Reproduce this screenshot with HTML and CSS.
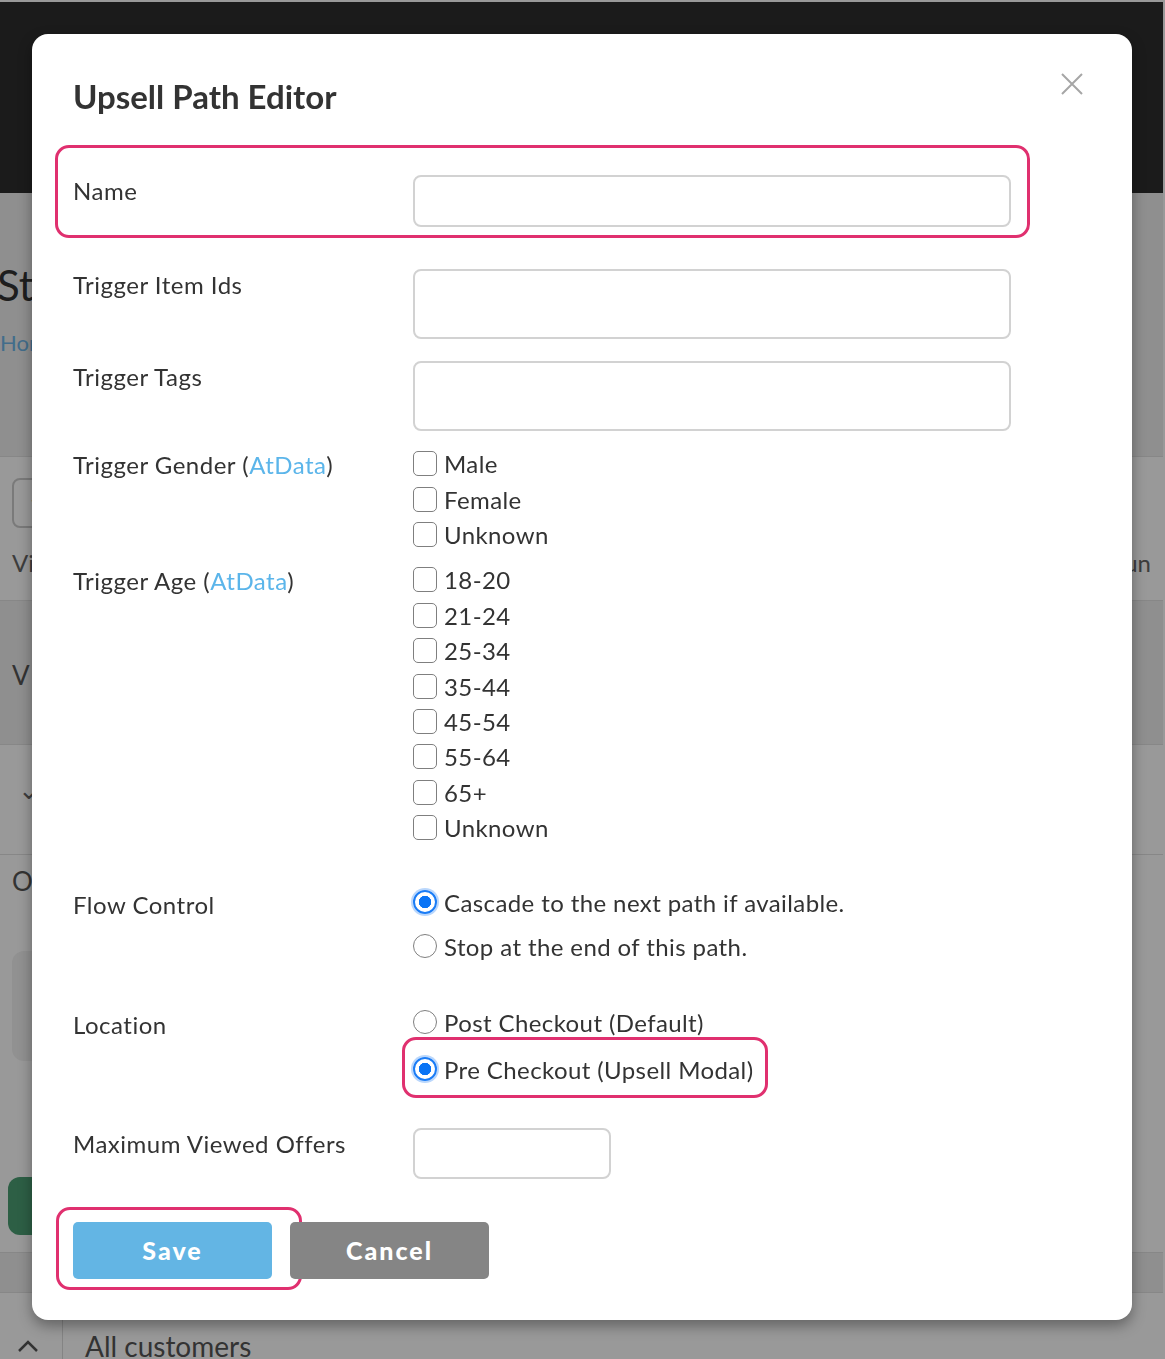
FILE: index.html
```html
<!DOCTYPE html>
<html lang="en">
<head>
    <meta charset="UTF-8">
    <meta name="viewport" content="width=device-width, initial-scale=1.0">
    <title>Upsell Path Editor</title>
    <link rel="stylesheet" href="styles.css">
</head>
<body>
    <div class="page">
        <header class="topbar"></header>
        <section class="band band-grey band-title">
            <h1 class="page-title">St</h1>
            <a class="crumb" href="#">Hor</a>
        </section>
        <section class="band band-white band-filter">
            <div class="filter-box">1</div>
            <div class="filter-row"><span>Vi</span><span>un</span></div>
        </section>
        <section class="band band-grey band-view">
            <span class="band-text">V</span>
        </section>
        <section class="band band-white band-toggle">
            <span class="chevron">&#8964;</span>
        </section>
        <section class="band band-white band-offers">
            <span class="band-text">O</span>
            <div class="offer-card"></div>
            <div class="green-btn"></div>
        </section>
        <section class="band band-grey band-strip"></section>
        <section class="band band-white band-footer">
            <span class="chevron-up">
                <svg width="22" height="14" viewBox="0 0 22 14"><path d="M2 12 L11 3 L20 12" stroke="#555" stroke-width="2.5" fill="none"/></svg>
            </span>
            <span class="footer-text">All customers</span>
        </section>
    </div>

    <div class="overlay"></div>

    <div class="modal">
        <button class="close" aria-label="Close">
            <svg width="24" height="24" viewBox="0 0 24 24"><path d="M2 2 L22 22 M22 2 L2 22" stroke="#a6a6a6" stroke-width="2" fill="none"/></svg>
        </button>
        <h2 class="modal-title">Upsell Path Editor</h2>

        <form class="editor">
            <div class="row row-name marked">
                <label class="field-label">Name</label>
                <input class="text-input" type="text">
            </div>

            <div class="row row-items">
                <label class="field-label">Trigger Item Ids</label>
                <input class="text-input tall" type="text">
            </div>

            <div class="row row-tags">
                <label class="field-label">Trigger Tags</label>
                <input class="text-input tall" type="text">
            </div>

            <div class="row row-gender">
                <label class="field-label">Trigger Gender (<a href="#">AtData</a>)</label>
                <div class="options">
                    <label class="check"><input type="checkbox">Male</label>
                    <label class="check"><input type="checkbox">Female</label>
                    <label class="check"><input type="checkbox">Unknown</label>
                </div>
            </div>

            <div class="row row-age">
                <label class="field-label">Trigger Age (<a href="#">AtData</a>)</label>
                <div class="options">
                    <label class="check"><input type="checkbox">18-20</label>
                    <label class="check"><input type="checkbox">21-24</label>
                    <label class="check"><input type="checkbox">25-34</label>
                    <label class="check"><input type="checkbox">35-44</label>
                    <label class="check"><input type="checkbox">45-54</label>
                    <label class="check"><input type="checkbox">55-64</label>
                    <label class="check"><input type="checkbox">65+</label>
                    <label class="check"><input type="checkbox">Unknown</label>
                </div>
            </div>

            <div class="row row-flow">
                <label class="field-label">Flow Control</label>
                <div class="options radios">
                    <label class="radio"><input type="radio" name="flow" checked>Cascade to the next path if available.</label>
                    <label class="radio"><input type="radio" name="flow">Stop at the end of this path.</label>
                </div>
            </div>

            <div class="row row-location">
                <label class="field-label">Location</label>
                <div class="options radios wide-gap">
                    <label class="radio"><input type="radio" name="location">Post Checkout (Default)</label>
                    <label class="radio marked"><input type="radio" name="location" checked>Pre Checkout (Upsell Modal)</label>
                </div>
            </div>

            <div class="row row-max">
                <label class="field-label">Maximum Viewed Offers</label>
                <input class="text-input short" type="text">
            </div>

            <div class="actions">
                <button type="submit" class="btn btn-save marked">Save</button>
                <button type="button" class="btn btn-cancel">Cancel</button>
            </div>
        </form>
    </div>
</body>
</html>
```

FILE: styles.css
```css
body {
    margin: 0;
    font-family: Lato, "Open Sans", Arial, sans-serif;
    color: #333;
    background: #fff;
}

/* page behind the modal */
.page {
    width: 1163px;
    border-top: 2px solid #fff;
    overflow: hidden;
}
.topbar {
    height: 191px;
    background: #2d2d2d;
}
.band {
    position: relative;
    box-sizing: border-box;
    border-bottom: 1px solid #e2e2e2;
}
.band-grey {
    background: #eeeeee;
}
.band-white {
    background: #fff;
}
.band-title {
    height: 264px;
    padding-top: 64px;
}
.page-title {
    margin: 0 0 0 -3px;
    font-size: 42px;
    font-weight: 400;
    line-height: 56px;
}
.crumb {
    display: block;
    margin-top: 16px;
    color: #6fb6e8;
    font-size: 22px;
    text-decoration: none;
}
.band-filter {
    height: 144px;
    padding: 21px 0 0 12px;
}
.filter-box {
    width: 120px;
    height: 50px;
    border: 2px solid #ccc;
    border-radius: 8px;
    box-sizing: border-box;
    padding: 10px 16px;
    font-size: 22px;
}
.filter-row {
    display: flex;
    justify-content: space-between;
    margin-top: 20px;
    padding-right: 12px;
    color: #666;
    font-size: 24px;
}
.band-view {
    height: 144px;
    padding: 58px 0 0 12px;
}
.band-text {
    color: #555;
    font-size: 26px;
}
.band-toggle {
    height: 110px;
    padding: 28px 0 0 18px;
}
.chevron {
    color: #666;
    font-size: 26px;
}
.band-offers {
    height: 398px;
    padding: 10px 0 0 12px;
}
.offer-card {
    width: 300px;
    height: 110px;
    margin-top: 54px;
    border-radius: 12px;
    background: #f2f2f2;
}
.green-btn {
    width: 140px;
    height: 58px;
    margin: 116px 0 0 -4px;
    border-radius: 12px;
    background: #4b9e74;
}
.band-strip {
    height: 40px;
}
.band-footer {
    height: 70px;
    display: flex;
    align-items: flex-start;
}
.chevron-up {
    width: 63px;
    height: 70px;
    border-right: 1px solid #ddd;
    box-sizing: border-box;
    padding: 44px 0 0 17px;
}
.footer-text {
    margin: 36px 0 0 22px;
    color: #555;
    font-size: 28px;
}

.overlay {
    position: fixed;
    inset: 0;
    background: rgba(0, 0, 0, 0.4);
}

/* modal */
.modal {
    position: absolute;
    left: 32px;
    top: 34px;
    width: 1100px;
    box-sizing: border-box;
    padding: 40px 41px 41px;
    background: #fff;
    border-radius: 16px;
    box-shadow: 0 6px 14px rgba(0, 0, 0, 0.35);
}
.close {
    position: absolute;
    top: 38px;
    right: 48px;
    width: 24px;
    height: 24px;
    padding: 0;
    border: none;
    background: none;
    cursor: pointer;
}
.modal-title {
    margin: 0;
    font-size: 33px;
    font-weight: 700;
    line-height: 44px;
    color: #333;
}

.editor {
    margin-top: 57px;
}
.row {
    position: relative;
    display: grid;
    grid-template-columns: 340px 598px;
    align-items: start;
}
.field-label {
    font-size: 24px;
    letter-spacing: 0.5px;
    line-height: 32px;
    color: #333;
}
.field-label a {
    color: #5bb5ea;
    text-decoration: none;
}
.row-items { margin-top: 42px; }
.row-tags { margin-top: 22px; }
.row-gender { margin-top: 18px; }
.row-age { margin-top: 10px; }
.row-flow { margin-top: 41px; }
.row-location { margin-top: 44px; }
.row-max { margin-top: 40px; }

.text-input {
    box-sizing: border-box;
    width: 598px;
    height: 52px;
    border: 2px solid #d2d2d2;
    border-radius: 8px;
    font: inherit;
    font-size: 22px;
    padding: 0 12px;
}
.text-input.tall {
    height: 70px;
}
.text-input.short {
    width: 198px;
    height: 51px;
}

.options {
    display: flex;
    flex-direction: column;
    margin: -3px 0 3px;
}
.check, .radio {
    display: flex;
    align-items: center;
    gap: 7px;
    font-size: 24px;
    letter-spacing: 0.4px;
    color: #333;
    width: fit-content;
}
.check {
    height: 35.4px;
}
.radio {
    height: 32px;
}
.radios {
    gap: 12px;
}
.radios.wide-gap {
    gap: 15px;
}
.check input, .radio input {
    appearance: none;
    margin: 0;
    width: 24px;
    height: 25px;
    box-sizing: border-box;
    border: 1.5px solid #7f7f7f;
    background: #fff;
    flex: none;
}
.check input {
    border-radius: 5px;
}
.radio input {
    height: 24px;
    border-radius: 50%;
}
.radio input:checked {
    border: 2px solid #1a7cf6;
    background: radial-gradient(circle, #0a74f5 0 6px, #fff 6.5px);
    box-shadow: 0 0 0 2px rgba(26, 124, 246, 0.3);
}

.actions {
    display: flex;
    gap: 18px;
    margin-top: 43px;
}
.btn {
    position: relative;
    width: 199px;
    height: 57px;
    padding-bottom: 3px;
    border: none;
    border-radius: 5px;
    color: #fff;
    font-family: Lato, Arial, sans-serif;
    font-size: 25px;
    font-weight: 900;
    letter-spacing: 2px;
    cursor: pointer;
}
.btn-save {
    background: #63b5e4;
}
.btn-cancel {
    background: #858585;
}

/* pink review annotations */
.marked {
    position: relative;
}
.marked::after {
    content: "";
    position: absolute;
    border: 3px solid #e0306f;
    border-radius: 14px;
    pointer-events: none;
}
.row-name::after {
    top: -30px;
    left: -18px;
    right: 61px;
    bottom: -11px;
}
.radio.marked::after {
    top: -16px;
    left: -11px;
    right: -14px;
    bottom: -13px;
}
.btn-save::after {
    top: -15px;
    left: -17px;
    right: -30px;
    bottom: -11px;
}
```
